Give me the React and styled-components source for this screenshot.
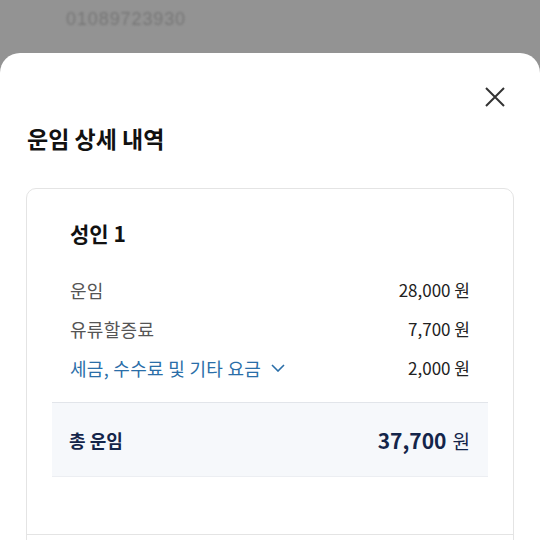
import React from "react";
import styled, { createGlobalStyle } from "styled-components";

const Global = createGlobalStyle`
  html, body { margin: 0; padding: 0; background: #939393; }
  body { font-family: "Noto Sans CJK KR", "Noto Sans", sans-serif; overflow: hidden; }
  * { box-sizing: border-box; }
`;

const Page = styled.div`
  width: 540px;
  height: 540px;
  display: flex;
  flex-direction: column;
  background: #939393;
  overflow: hidden;
`;

const TopBar = styled.div`
  height: 53px;
  flex: none;
  padding: 6px 0 0 66px;
`;

const Phone = styled.span`
  font-family: "Liberation Sans", Arial, sans-serif;
  font-size: 18px;
  letter-spacing: 0.9px;
  color: #767676;
  filter: blur(0.8px);
`;

const Sheet = styled.div`
  flex: 1;
  background: #ffffff;
  border-radius: 20px 20px 0 0;
  padding: 0 26px 0 26px;
  display: flex;
  flex-direction: column;
  min-height: 0;
`;

const HeaderRow = styled.div`
  display: flex;
  justify-content: flex-end;
  padding: 34px 9px 0 0;
`;

const CloseButton = styled.button`
  width: 20px;
  height: 20px;
  padding: 0;
  border: none;
  background: none;
  display: flex;
  color: #333;
`;

const Title = styled.h1`
  margin: 16px 0 0 1px;
  font-size: 23px;
  line-height: 30px;
  font-weight: 700;
  color: #111;
`;

const Card = styled.div`
  margin-top: 35px;
  border: 1px solid #e4e4e4;
  border-radius: 10px;
  display: flex;
  flex-direction: column;
  flex: none;
`;

const Section = styled.div`
  padding: 29px 25px 57px 25px;
  border-bottom: 1px solid #e4e4e4;
  display: flex;
  flex-direction: column;
`;

const Heading = styled.h2`
  margin: 0 0 22px 18px;
  font-size: 21px;
  line-height: 30px;
  font-weight: 700;
  color: #111;
`;

const Row = styled.div`
  height: 39px;
  display: flex;
  align-items: center;
  justify-content: space-between;
  padding: 0 18px;
`;

const Label = styled.span`
  font-size: 18px;
  letter-spacing: 0.3px;
  color: ${(p) => (p.$link ? "#2a6ea8" : "#555")};
  display: flex;
  align-items: center;
  gap: 10px;
`;

const Value = styled.span`
  font-size: 17px;
  color: #222;
`;

const Total = styled.div`
  margin-top: 15px;
  height: 75px;
  border-top: 1px solid #e2e5ea;
  border-bottom: 1px solid #eceef2;
  background: #f6f8fb;
  display: flex;
  align-items: center;
  justify-content: space-between;
  padding: 0 18px 0 17px;
  color: #14254a;
`;

const TotalLabel = styled.span`
  font-size: 18px;
  font-weight: 700;
`;

const TotalValue = styled.span`
  font-size: 21px;
  font-weight: 700;
  span { font-weight: 400; font-size: 19px; margin-left: 6px; }
`;

const fees = [
  { label: "운임", value: "28,000 원" },
  { label: "유류할증료", value: "7,700 원" },
  { label: "세금, 수수료 및 기타 요금", value: "2,000 원", link: true },
];

export default function App() {
  return (
    <>
      <Global />
      <Page>
        <TopBar>
          <Phone>01089723930</Phone>
        </TopBar>
        <Sheet>
          <HeaderRow>
            <CloseButton aria-label="닫기">
              <svg width="20" height="20" viewBox="0 0 20 20" fill="none" stroke="currentColor" strokeWidth="2">
                <path d="M1 1L19 19M19 1L1 19" />
              </svg>
            </CloseButton>
          </HeaderRow>
          <Title>운임 상세 내역</Title>
          <Card>
            <Section>
              <Heading>성인 1</Heading>
              {fees.map((f) => (
                <Row key={f.label}>
                  <Label $link={f.link}>
                    {f.label}
                    {f.link && (
                      <svg width="14" height="8" viewBox="0 0 14 8" fill="none" stroke="currentColor" strokeWidth="1.6">
                        <path d="M1 1L7 7L13 1" />
                      </svg>
                    )}
                  </Label>
                  <Value>{f.value}</Value>
                </Row>
              ))}
              <Total>
                <TotalLabel>총 운임</TotalLabel>
                <TotalValue>
                  37,700<span>원</span>
                </TotalValue>
              </Total>
            </Section>
            <Section />
          </Card>
        </Sheet>
      </Page>
    </>
  );
}
